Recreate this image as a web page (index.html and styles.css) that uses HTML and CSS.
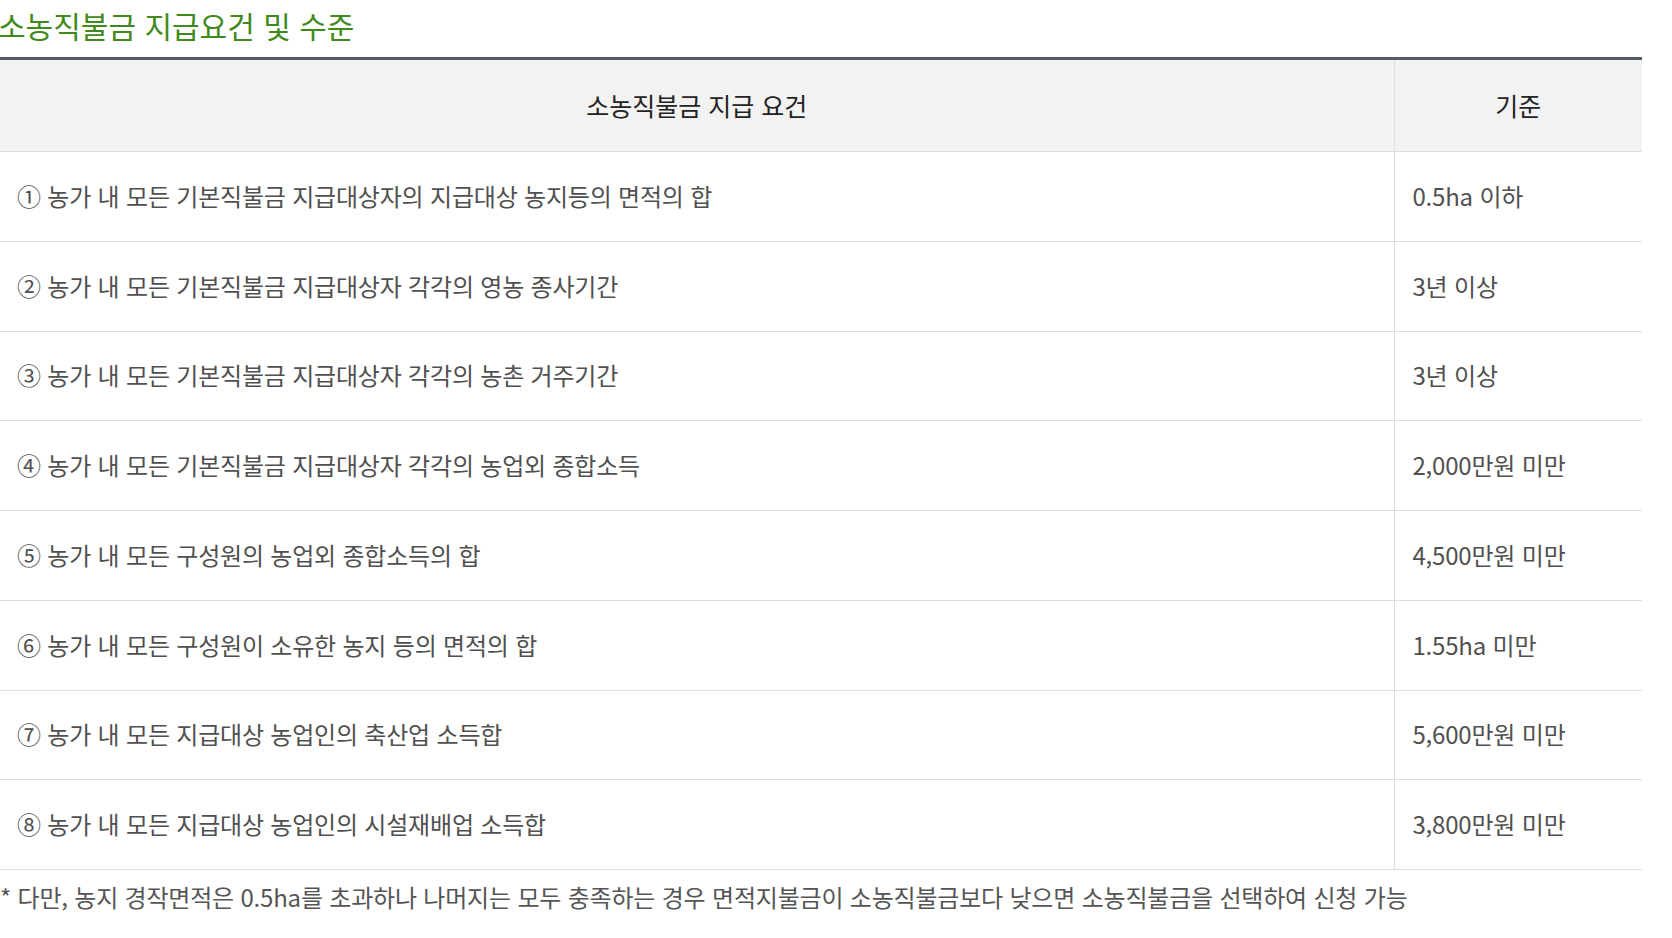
FILE: index.html
```html
<!DOCTYPE html>
<html lang="ko">
<head>
<meta charset="utf-8">
<title>소농직불금 지급요건 및 수준</title>
<link rel="stylesheet" href="styles.css">
</head>
<body>
<div class="wrap">
  <h3 class="title">소농직불금 지급요건 및 수준</h3>
  <table class="req">
    <colgroup><col class="c1"><col class="c2"></colgroup>
    <thead>
      <tr><th>소농직불금 지급 요건</th><th>기준</th></tr>
    </thead>
    <tbody>
      <tr><td>① 농가 내 모든 기본직불금 지급대상자의 지급대상 농지등의 면적의 합</td><td>0.5ha 이하</td></tr>
      <tr><td>② 농가 내 모든 기본직불금 지급대상자 각각의 영농 종사기간</td><td>3년 이상</td></tr>
      <tr><td>③ 농가 내 모든 기본직불금 지급대상자 각각의 농촌 거주기간</td><td>3년 이상</td></tr>
      <tr><td>④ 농가 내 모든 기본직불금 지급대상자 각각의 농업외 종합소득</td><td>2,000만원 미만</td></tr>
      <tr><td>⑤ 농가 내 모든 구성원의 농업외 종합소득의 합</td><td>4,500만원 미만</td></tr>
      <tr><td>⑥ 농가 내 모든 구성원이 소유한 농지 등의 면적의 합</td><td>1.55ha 미만</td></tr>
      <tr><td>⑦ 농가 내 모든 지급대상 농업인의 축산업 소득합</td><td>5,600만원 미만</td></tr>
      <tr><td>⑧ 농가 내 모든 지급대상 농업인의 시설재배업 소득합</td><td>3,800만원 미만</td></tr>
    </tbody>
  </table>
  <p class="note">* 다만, 농지 경작면적은 0.5ha를 초과하나 나머지는 모두 충족하는 경우 면적지불금이 소농직불금보다 낮으면 소농직불금을 선택하여 신청 가능</p>
</div>
</body>
</html>
```

FILE: styles.css
```css
* { box-sizing: border-box; }
html, body { margin: 0; padding: 0; background: #fff; }
body {
  font-family: "Noto Sans CJK KR", "Noto Sans", sans-serif;
  color: #555;
}
.wrap { width: 1642px; }
.title {
  margin: 0 0 0 -2px;
  height: 57px;
  padding-top: 4px;
  font-size: 30px;
  line-height: 42px;
  font-weight: 400;
  color: #3f8a1a;
}
.req {
  width: 1642px;
  border-collapse: collapse;
  border-top: 3px solid #565b68;
  table-layout: fixed;
}
.req .c1 { width: 1394px; }
.req .c2 { width: 248px; }
.req th {
  height: 93px;
  background: #f2f2f2;
  font-size: 25px;
  font-weight: 400;
  color: #222;
  text-align: center;
  border-bottom: 1px solid #ddd;
  padding: 0 0 2px 0;
}
.req th + th { border-left: 1px solid #ddd; }
.req td {
  height: 89.75px;
  font-size: 24px;
  color: #505050;
  letter-spacing: -0.2px;
  padding: 0 0 2px 17px;
  border-bottom: 1px solid #ddd;
}
.req td + td { border-left: 1px solid #ddd; padding-left: 18px; }
.note {
  margin: 10px 0 0 0;
  font-size: 24px;
  line-height: 34px;
  color: #555;
  letter-spacing: -0.2px;
}
```
